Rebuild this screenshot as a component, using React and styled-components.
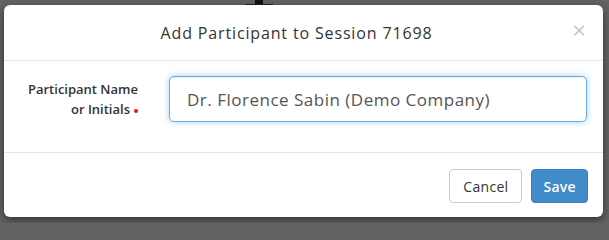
import React from 'react';
import styled, { createGlobalStyle } from 'styled-components';

const GlobalStyle = createGlobalStyle`
  html, body {
    margin: 0;
    padding: 0;
    background: #636363;
  }
  body {
    font-family: 'Open Sans', Lato, sans-serif;
  }
`;

const Backdrop = styled.div`
  width: 609px;
  height: 223px;
  background: #636363;
  display: flex;
  flex-direction: column;
  overflow: hidden;
`;

const Peek = styled.div`
  height: 5px;
  display: flex;
  flex-direction: column;
  align-items: center;
  width: 28px;
  margin-left: 245px;
`;

const PeekStem = styled.div`
  width: 8px;
  flex: 1;
  background: #111;
`;

const PeekBar = styled.div`
  width: 28px;
  height: 1px;
  background: #222;
`;

const Dialog = styled.div`
  position: relative;
  margin-left: 4px;
  width: 599px;
  height: 212px;
  background: #fff;
  border-radius: 6px;
  box-shadow: 0 3px 9px rgba(0, 0, 0, 0.5);
  display: flex;
  flex-direction: column;
  color: #333;
`;

const Header = styled.div`
  height: 55px;
  border-bottom: 1px solid #e5e5e5;
  display: flex;
  align-items: center;
  justify-content: center;
  padding: 0 29px 0 15px;
`;

const Title = styled.h4`
  margin: 0;
  font-size: 16px;
  font-weight: 400;
  letter-spacing: 0.85px;
  color: #333;
  line-height: 20px;
`;

const Close = styled.button`
  position: absolute;
  top: 14px;
  right: 17px;
  border: 0;
  background: none;
  padding: 0;
  color: #c8c8c8;
  font-family: 'Open Sans', sans-serif;
  font-size: 24px;
  line-height: 22px;
  cursor: pointer;
`;

const Body = styled.div`
  border-bottom: 1px solid #e5e5e5;
  padding: 15px 16px 0 15px;
  box-sizing: border-box;
  height: 92px;
`;

const FormRow = styled.div`
  display: grid;
  grid-template-columns: 119px 1fr;
  column-gap: 31px;
  align-items: center;
`;

const Label = styled.label`
  font-size: 13px;
  font-weight: 600;
  line-height: 20px;
  text-align: right;
  color: #333;
`;

const Required = styled.span`
  display: inline-block;
  width: 4px;
  height: 4px;
  border-radius: 50%;
  background: #e8141b;
  margin-left: 4px;
  vertical-align: middle;
`;

const Input = styled.input`
  box-sizing: border-box;
  width: 100%;
  height: 46px;
  padding: 0 17px;
  font-family: 'Open Sans', sans-serif;
  font-size: 17px;
  letter-spacing: 0.5px;
  color: #555;
  border: 1px solid #66afe9;
  border-radius: 5px;
  outline: none;
  box-shadow: inset 0 1px 1px rgba(0, 0, 0, 0.075), 0 0 6px rgba(102, 175, 233, 0.6);
  caret-color: #333;
`;

const Footer = styled.div`
  flex: 1;
  display: flex;
  justify-content: flex-end;
  align-items: flex-start;
  gap: 9px;
  padding: 16px 15px 0 0;
`;

const Button = styled.button`
  height: 34px;
  padding: 0 ${p => (p.$primary ? '11px' : '13px')};
  font-family: 'Open Sans', sans-serif;
  font-size: 14px;
  letter-spacing: 0.3px;
  font-weight: ${p => (p.$primary ? 600 : 400)};
  border-radius: 4px;
  border: 1px solid ${p => (p.$primary ? '#3a80c0' : '#ccc')};
  background: ${p => (p.$primary ? '#428bca' : '#fff')};
  color: ${p => (p.$primary ? '#fff' : '#333')};
  cursor: pointer;
`;

const App = () => (
  <>
    <GlobalStyle />
    <Backdrop>
      <Peek>
        <PeekStem />
        <PeekBar />
      </Peek>
      <Dialog>
        <Header>
          <Title>Add Participant to Session 71698</Title>
        </Header>
        <Close aria-label="Close">×</Close>
        <Body>
          <FormRow>
            <Label htmlFor="participant">
              Participant Name
              <br />
              or Initials<Required />
            </Label>
            <Input id="participant" defaultValue="Dr. Florence Sabin (Demo Company)" autoFocus />
          </FormRow>
        </Body>
        <Footer>
          <Button>Cancel</Button>
          <Button $primary>Save</Button>
        </Footer>
      </Dialog>
    </Backdrop>
  </>
);

export default App;
